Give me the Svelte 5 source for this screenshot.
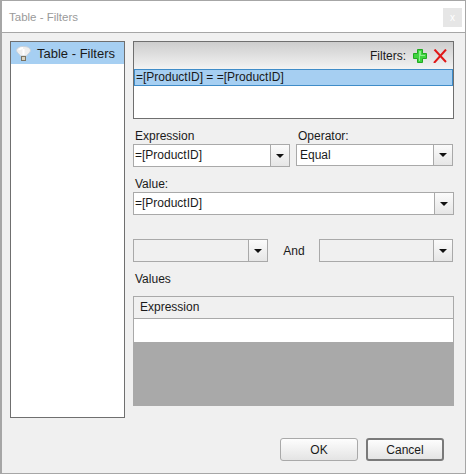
<script>
  let filters = ["=[ProductID] = =[ProductID]"];
</script>

<div class="window">
  <div class="titlebar">
    <span class="title">Table - Filters</span>
    <span class="close">x</span>
  </div>

  <div class="body">
    <div class="sidebar">
      <div class="side-item">
        <svg class="bulb" width="15" height="15" viewBox="0 0 15 15">
          <path d="M7.500.5C3.500.5.500 2 .500 4.500c0 2 3 3.500 4 5.500h6c1-2 4-3.500 4-5.500C14.500 2 11.500.5 7.500.5z" fill="#efefef" stroke="#c8d2dc" />
          <path d="M3 4c1-1.500 2.500-2 4-2" fill="none" stroke="#fff" stroke-width="2" />
          <path d="M7.500 3v6" stroke="#fff" stroke-width="2" />
          <rect x="5.500" y="10.500" width="4" height="4" fill="#d8d2c0" stroke="#7a7362" />
        </svg>
        <span>Table - Filters</span>
      </div>
    </div>

    <div class="main">
      <div class="filters">
        <div class="filters-head">
          <span>Filters:</span>
          <svg class="add" width="14" height="14" viewBox="0 0 14 14">
            <path d="M4.500.5h5v4h4v5h-4v4h-5v-4h-4v-5h4z" fill="#3fd43f" stroke="#22aa22" />
            <path d="M6 2h2v4h4v1H7v5H6z" fill="#8bf08b" />
          </svg>
          <svg class="del" width="14" height="14" viewBox="0 0 14 14">
            <path d="M1.500.5 13 13M13 .5 1 14" fill="none" stroke="#e01818" stroke-width="2" />
          </svg>
        </div>
        <div class="filter-list">
          {#each filters as f}
            <div class="filter-row">{f}</div>
          {/each}
        </div>
      </div>

      <div class="pair">
        <div class="field">
          <div class="label">Expression</div>
          <div class="combo">
            <div class="combo-text">=[ProductID]</div>
            <div class="arrow"><i></i></div>
          </div>
        </div>
        <div class="field">
          <div class="label">Operator:</div>
          <div class="combo short">
            <div class="combo-text">Equal</div>
            <div class="arrow"><i></i></div>
          </div>
        </div>
      </div>

      <div class="field value">
        <div class="label">Value:</div>
        <div class="combo">
          <div class="combo-text">=[ProductID]</div>
          <div class="arrow"><i></i></div>
        </div>
      </div>

      <div class="range">
        <div class="combo off">
          <div class="combo-text"></div>
          <div class="arrow"><i></i></div>
        </div>
        <span class="and">And</span>
        <div class="combo off">
          <div class="combo-text"></div>
          <div class="arrow"><i></i></div>
        </div>
      </div>

      <div class="label values">Values</div>
      <div class="grid">
        <div class="grid-head">Expression</div>
        <div class="grid-row"></div>
      </div>

      <div class="buttons">
        <button>OK</button>
        <button class="cancel">Cancel</button>
      </div>
    </div>
  </div>
</div>

<style>
  :global(body) { margin: 0; background: #f0f0f0; }
  .window {
    box-sizing: border-box;
    width: 466px;
    height: 474px;
    border: 1px solid #a6a6a6;
    border-left-width: 2px;
    display: flex;
    flex-direction: column;
    font-family: "Liberation Sans", Arial, sans-serif;
    font-size: 12px;
    color: #1a1a1a;
    background: #f0f0f0;
  }
  .titlebar {
    height: 31px;
    flex: none;
    background: #fff;
    border-bottom: 1px solid #a6a6a6;
    display: flex;
    align-items: center;
    justify-content: space-between;
    padding: 0 3px 0 7px;
  }
  .title { color: #9a9a9a; font-size: 11.500px; }
  .close {
    width: 19px;
    height: 19px;
    margin-top: 1px;
    background: #e6e6e6;
    color: #fff;
    display: flex;
    align-items: center;
    justify-content: center;
    font-size: 10px;
  }
  .body {
    flex: 1;
    display: flex;
    gap: 8px;
    padding: 8px 11px 12px 8px;
    min-height: 0;
  }
  .sidebar {
    box-sizing: border-box;
    width: 115px;
    height: 377px;
    flex: none;
    background: #fff;
    border: 1px solid #6f6f6f;
  }
  .side-item {
    height: 22px;
    background: #a6cff2;
    display: flex;
    align-items: center;
    gap: 6px;
    padding-left: 5px;
    font-size: 13px;
  }
  .bulb { flex: none; margin-top: 1px; }
  .main { flex: 1; min-width: 0; display: flex; flex-direction: column; }
  .filters {
    box-sizing: border-box;
    height: 78px;
    background: #fff;
    border: 1px solid #6f6f6f;
  }
  .filters-head {
    height: 27px;
    background: linear-gradient(#cdcdcd, #f3f3f3);
    display: flex;
    align-items: center;
    justify-content: flex-end;
    gap: 6px;
    padding-right: 6px;
    font-size: 12px;
  }
  .add { margin-left: 1px; }
  .filter-row {
    box-sizing: border-box;
    height: 17px;
    line-height: 15px;
    background: #a6cff2;
    border: 1px solid #3f8cc8;
    padding-left: 1px;
  }
  .pair {
    display: grid;
    grid-template-columns: 157px 157px;
    column-gap: 6px;
    margin-top: 9px;
    align-items: start;
  }
  .label { height: 16px; line-height: 16px; padding-left: 2px; }
  .combo {
    box-sizing: border-box;
    height: 23px;
    display: flex;
    background: #fff;
    border: 1px solid #a9a9a9;
  }
  .combo.short { height: 22px; }
  .combo-text { flex: 1; line-height: 21px; padding-left: 1px; }
  .combo.short .combo-text { padding-left: 3px; line-height: 20px; }
  .combo.off { flex: 1; background: #f0f0f0; }
  .arrow {
    width: 18px;
    flex: none;
    border-left: 1px solid #a9a9a9;
    background: linear-gradient(#fbfbfb, #e6e6e6);
    display: flex;
    align-items: center;
    justify-content: center;
  }
  .arrow i {
    width: 0;
    height: 0;
    border-left: 4px solid transparent;
    border-right: 4px solid transparent;
    border-top: 4px solid #111;
  }
  .value { margin-top: 9px; }
  .range {
    display: flex;
    align-items: center;
    margin-top: 24px;
    width: 320px;
  }
  .range .combo { flex: none; width: 135px; }
  .and { width: 51px; text-align: center; padding-left: 1px; }
  .range .and + .combo { width: 134px; }
  .values { margin-top: 9px; }
  .grid {
    box-sizing: border-box;
    height: 110px;
    width: 321px;
    margin-top: 9px;
    background: #a9a9a9;
    border: 1px solid #a9a9a9;
    border-bottom: 0;
  }
  .grid-head {
    box-sizing: border-box;
    height: 22px;
    line-height: 21px;
    background: #f0f0f0;
    border-bottom: 1px solid #a9a9a9;
    padding-left: 6px;
  }
  .grid-row { height: 23px; background: #fff; }
  .buttons {
    display: flex;
    justify-content: flex-end;
    gap: 8px;
    margin-top: 32px;
    padding-right: 10px;
  }
  button {
    box-sizing: border-box;
    width: 78px;
    height: 23px;
    padding: 0;
    background: linear-gradient(#fdfdfd, #e4e4e4);
    border: 1px solid #a9a9a9;
    border-radius: 3px;
    font: inherit;
    color: #1a1a1a;
  }
  .cancel { border: 2px solid #7a7a7a; }
</style>
